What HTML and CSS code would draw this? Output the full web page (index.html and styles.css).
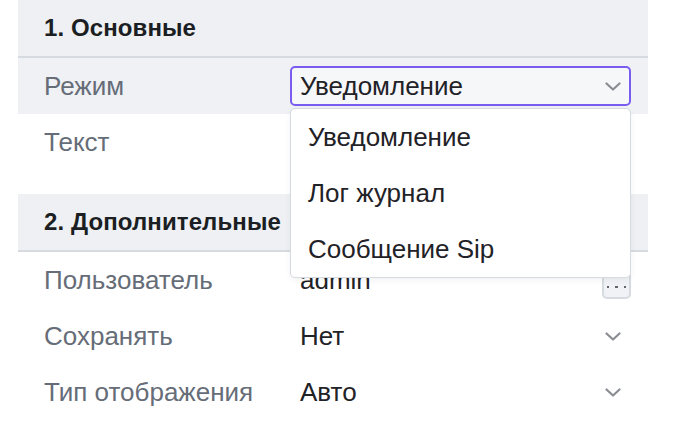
FILE: index.html
```html
<!DOCTYPE html>
<html lang="ru">
<head>
<meta charset="utf-8">
<title>Свойства</title>
<link rel="stylesheet" href="styles.css">
</head>
<body>
<div class="panel">
  <section class="group">
    <div class="group-head">1. Основные</div>
    <div class="row row-active">
      <div class="label">Режим</div>
      <div class="value">
        <div class="select">
          <span>Уведомление</span>
          <svg class="chev chev-sel" viewBox="0 0 16 9" width="16" height="9"><path d="M1.5 1.5 L8 7.5 L14.5 1.5" fill="none" stroke="#8a8d93" stroke-width="2.2" stroke-linecap="round" stroke-linejoin="round"/></svg>
        </div>
        <ul class="dropdown">
          <li>Уведомление</li>
          <li>Лог журнал</li>
          <li>Сообщение Sip</li>
        </ul>
      </div>
    </div>
    <div class="row">
      <div class="label">Текст</div>
      <div class="value plain"></div>
    </div>
  </section>
  <section class="group">
    <div class="group-head">2. Дополнительные</div>
    <div class="row">
      <div class="label">Пользователь</div>
      <div class="value plain">
        <span>admin</span>
        <button class="more" type="button"><span class="dot"></span><span class="dot"></span><span class="dot"></span></button>
      </div>
    </div>
    <div class="row">
      <div class="label">Сохранять</div>
      <div class="value plain">
        <span>Нет</span>
        <svg class="chev" viewBox="0 0 16 9" width="16" height="9"><path d="M1.5 1.5 L8 7.5 L14.5 1.5" fill="none" stroke="#8a8d93" stroke-width="2.2" stroke-linecap="round" stroke-linejoin="round"/></svg>
      </div>
    </div>
    <div class="row">
      <div class="label">Тип отображения</div>
      <div class="value plain">
        <span>Авто</span>
        <svg class="chev" viewBox="0 0 16 9" width="16" height="9"><path d="M1.5 1.5 L8 7.5 L14.5 1.5" fill="none" stroke="#8a8d93" stroke-width="2.2" stroke-linecap="round" stroke-linejoin="round"/></svg>
      </div>
    </div>
    <div class="row row-next">
      <div class="label">Приоритет</div>
      <div class="value plain"><span>Любой</span></div>
    </div>
  </section>
</div>
</body>
</html>
```
FILE: styles.css
```css
* { box-sizing: border-box; }
html, body { margin: 0; padding: 0; background: #ffffff; }
body {
  font-family: "Liberation Sans", Arial, sans-serif;
  color: #1f2227;
  overflow: hidden;
  height: 440px;
}
.panel {
  width: 630px;
  margin-left: 18px;
}
.group { margin-bottom: 24px; }
.group-head {
  height: 58px;
  background: #eef0f4;
  border-bottom: 2px solid #d6dae1;
  padding-left: 26px;
  padding-bottom: 1px;
  display: flex;
  align-items: center;
  font-weight: bold;
  font-size: 24px;
  color: #1b1e22;
  letter-spacing: 0.1px;
}
.row {
  height: 56px;
  display: grid;
  grid-template-columns: 246px 341px;
  padding: 0 17px 0 26px;
  align-items: center;
}
.row-active { background: #eff1f5; }
.row-next { margin-top: 3px; }
.label {
  font-size: 26px;
  color: #666d78;
}
.value {
  position: relative;
  font-size: 26px;
  color: #1f2227;
}
.plain {
  height: 40px;
  padding-left: 10px;
  padding-right: 10px;
  display: flex;
  align-items: center;
  justify-content: space-between;
}
.select {
  height: 40px;
  border: 2px solid #7b5cf0;
  border-radius: 5px;
  background: #f6f7f9;
  padding: 0 8px 0 8px;
  display: flex;
  align-items: center;
  justify-content: space-between;
}
.chev { display: block; }
.dropdown {
  position: absolute;
  left: 0;
  right: 0;
  top: 42px;
  margin: 0;
  padding: 0;
  list-style: none;
  background: #ffffff;
  border: 1.5px solid #d6dae1;
  border-radius: 5px;
  box-shadow: 0 2px 6px rgba(0,0,0,0.06);
  z-index: 10;
}
.dropdown li {
  height: 56px;
  display: flex;
  align-items: center;
  padding-left: 17px;
  font-size: 26px;
  color: #1f2227;
}
.more {
  width: 29px;
  height: 38px;
  margin-right: -10px;
  border: 2px solid #d6dae1;
  border-radius: 5px;
  background: #f0f2f5;
  display: flex;
  align-items: center;
  justify-content: center;
  gap: 6px;
  padding: 14px 0 0;
}
.dot {
  width: 2.5px;
  height: 2.5px;
  background: #5f6670;
  display: block;
}
```
